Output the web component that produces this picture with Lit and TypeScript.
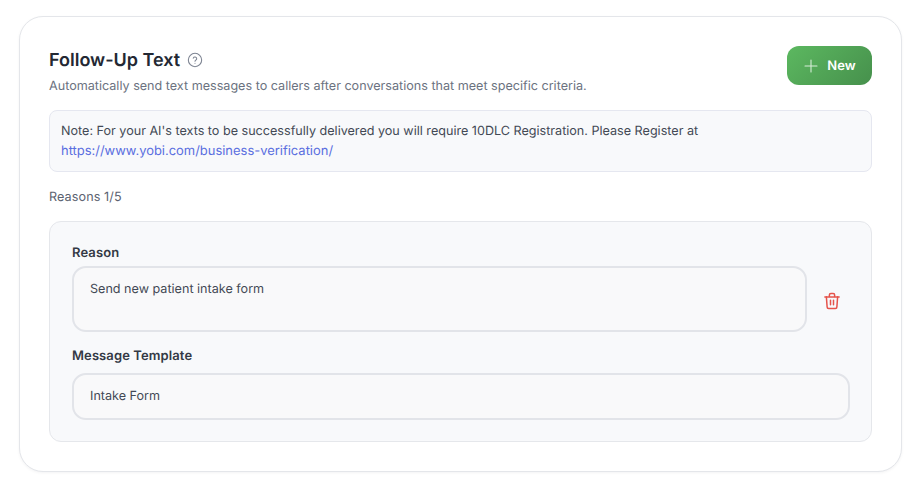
import { LitElement, html, css } from "lit";
import { customElement } from "lit/decorators.js";

@customElement("app-root")
export class AppRoot extends LitElement {
  static styles = css`
    :host { display: block; width: 920px; height: 488px; background: #fff; font-family: Inter, sans-serif; color: #2b303b; box-sizing: border-box; padding: 16px 18px 16px 19px; overflow: hidden; text-rendering: geometricPrecision; }
    * { box-sizing: border-box; }
    .card { height: 456px; border: 1px solid #e4e6ea; border-radius: 24px; padding: 29px; background: #fff; box-shadow: 0 1px 3px rgba(20,25,40,.05); }
    .head { display: flex; justify-content: space-between; align-items: flex-start; height: 64px; }
    .title { display: flex; align-items: center; gap: 7px; font-size: 18px; font-weight: 600; line-height: 30px; color: #232833; }
    .title svg { margin-top: -2px; }
    .sub { font-size: 12.6px; color: #6b7280; line-height: 16px; margin-top: 3px; }
    .btn { width: 85px; height: 39px; border-radius: 12px; background: linear-gradient(135deg, #5cb860, #46904c); color: #fff; font-size: 13px; font-weight: 600; display: flex; align-items: center; justify-content: center; gap: 8px; letter-spacing: .1px; }
    .note { height: 62px; border: 1px solid #e5e7f0; border-radius: 8px; background: #f8f9fb; padding: 11px 11px 0; font-size: 12.6px; line-height: 20px; color: #434955; }
    .note a { color: #5a6ee0; text-decoration: none; display: block; font-size: 12.95px; margin-top: -1px; }
    .count { font-size: 12.6px; color: #5b6270; line-height: 16px; margin-top: 18px; letter-spacing: .1px; }
    .panel { margin-top: 15px; height: 221px; border: 1px solid #e5e7eb; border-radius: 12px; background: #f8f9fb; padding: 23px 21px 22px 22px; }
    .label { font-size: 13px; font-weight: 600; line-height: 16px; color: #343945; letter-spacing: .1px; }
    .row { display: flex; align-items: center; gap: 16px; margin-top: 5px; }
    .row2 { margin-top: 9px; }
    .input { flex: 1; border: 2px solid #e2e4e9; border-radius: 14px; background: #f9f9fa; font-size: 12.6px; color: #434955; padding: 0 16px; }
    .ta { height: 66px; padding-top: 14px; line-height: 16px; }
    .single { height: 47px; display: flex; align-items: center; }
    .trash { width: 18px; height: 18px; margin: 4px 9px 0 0; display: block; }
    .m { margin-top: 16px; }
  `;

  render() {
    return html`<div class="card">
      <div class="head">
        <div>
          <div class="title">Follow-Up Text
            <svg width="16" height="16" viewBox="0 0 24 24" fill="none" stroke="#7d8492" stroke-width="1.6" stroke-linecap="round" stroke-linejoin="round"><circle cx="12" cy="12" r="10"/><path d="M9.4 9.2a2.7 2.7 0 0 1 5.2.9c0 1.8-2.6 2.2-2.6 3.6"/><path d="M12 17h.01"/></svg>
          </div>
          <div class="sub">Automatically send text messages to callers after conversations that meet specific criteria.</div>
        </div>
        <div class="btn">
          <svg width="16" height="16" viewBox="0 0 24 24" fill="none" stroke="#d8eeda" stroke-width="1.6" stroke-linecap="round"><path d="M12 3v18M3 12h18"/></svg>
          New
        </div>
      </div>
      <div class="note">Note: For your AI's texts to be successfully delivered you will require 10DLC Registration. Please Register at
        <a>https://www.yobi.com/business-verification/</a></div>
      <div class="count">Reasons 1/5</div>
      <div class="panel">
        <div class="label">Reason</div>
        <div class="row">
          <div class="input ta">Send new patient intake form</div>
          <svg class="trash" viewBox="0 0 24 24" fill="none" stroke="#e5534b" stroke-width="2" stroke-linecap="round" stroke-linejoin="round"><path d="M2.5 6.5h19"/><path d="M8.5 6V4a2 2 0 0 1 2-2h3a2 2 0 0 1 2 2v2"/><path d="M19.5 6.5l-1 13.5a2 2 0 0 1-2 2h-9a2 2 0 0 1-2-2l-1-13.5"/><path d="M10 11v6M14 11v6"/></svg>
        </div>
        <div class="label m">Message Template</div>
        <div class="row row2"><div class="input single">Intake Form</div></div>
      </div>
    </div>`;
  }
}
